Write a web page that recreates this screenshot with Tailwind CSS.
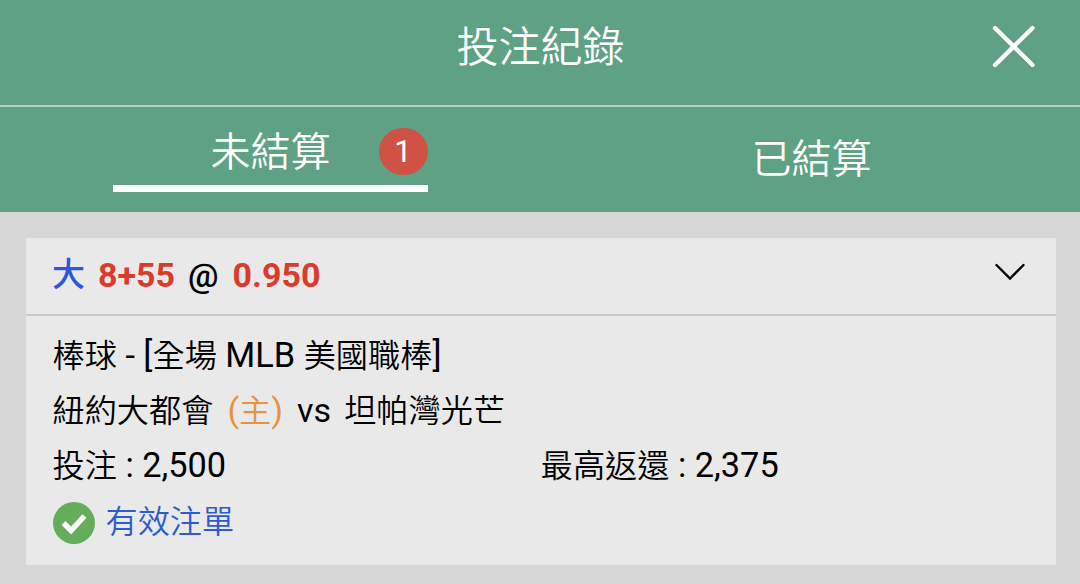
<!DOCTYPE html>
<html lang="zh-Hant">
<head>
  <meta charset="UTF-8" />
  <title>投注紀錄</title>
  <meta name="viewport" content="width=device-width, initial-scale=1" />
  <script src="https://cdn.jsdelivr.net/npm/@tailwindcss/browser@4"></script>
</head>
<body class="h-[584px] overflow-hidden bg-[#d7d7d7] font-[Roboto,'Noto_Sans_CJK_TC',sans-serif] text-black">

  <!-- HEADER -->
  <header class="grid h-[107px] grid-cols-[1fr_auto_1fr] border-b-2 border-[#b4d3c5] bg-[#5ea185] text-white">
    <span></span>
    <h1 class="pt-[17px] pl-px text-[42px] leading-[62px] font-[350]">投注紀錄</h1>
    <button class="mt-[25px] mr-[45px] h-[43px] w-[43px] justify-self-end" aria-label="關閉">
      <svg viewBox="0 0 43 43" class="h-[43px] w-[43px]" fill="none" stroke="currentColor" stroke-width="4.4" stroke-linecap="round">
        <path d="M3 3L40.500 40M40.500 3L3 40"/>
      </svg>
    </button>
  </header>

  <!-- TABS -->
  <nav class="flex h-[105px] bg-[#5ea185] text-[40px] leading-[60px] font-[350] text-white">
    <div class="flex w-1/2 justify-center">
      <a class="mt-4 flex h-[69px] w-[315px] border-b-[7px] border-white pl-[98px]">
        <span>未結算</span>
        <span class="mt-[5px] ml-12 h-[47px] w-[49px] rounded-full bg-[#cf5245] text-center text-[31px] leading-[47px] font-normal">1</span>
      </a>
    </div>
    <a class="w-1/2 pt-[23px] pl-[3px] text-center">已結算</a>
  </nav>

  <!-- BET CARD -->
  <main class="pt-[26px] pr-6 pl-[26px]">
    <article class="h-[327px] bg-[#e9e9e9]">
      <div class="flex h-[78px] justify-between border-b-2 border-[#cbcbcb] pr-[31px] pl-[26px]">
        <div class="flex text-[34px] leading-[75px] font-bold text-[#dc3a2b]">
          <span class="mr-[13px] text-[33px] leading-[74px] font-medium text-[#2b59d8]">大</span>
          <span class="mr-[13px]">8+55</span>
          <span class="mr-[14px] font-medium text-black">@</span>
          <span>0.950</span>
        </div>
        <svg viewBox="0 0 30 18" class="mt-[25px] h-[18px] w-[30px]" fill="none" stroke="black" stroke-width="2.4" stroke-linecap="round">
          <path d="M1.500 2L15 15.500L28.500 2"/>
        </svg>
      </div>

      <div class="pt-[12px] pr-[27px] pl-[26.500px] text-[32.200px] leading-[55px] font-[350]">
        <p class="h-[55px] whitespace-pre">棒球<span class="text-[34.300px] font-normal"> - [</span>全場<span class="text-[34.300px] font-normal"> MLB </span>美國職棒<span class="text-[34.300px] font-normal">]</span></p>
        <p class="flex h-[55px] pt-px">
          <span class="mr-[14px]">紐約大都會</span>
          <span class="-mt-px mr-[14px] text-[#e8923f]"><span class="text-[34px] font-normal">(</span>主<span class="text-[34px] font-normal">)</span></span>
          <span class="-mt-px mr-[13px] text-[34px] font-normal">vs</span>
          <span>坦帕灣光芒</span>
        </p>
        <div class="grid h-[55px] grid-cols-2">
          <p>投注<span class="text-[34.300px] font-normal"> : 2,500</span></p>
          <p>最高返還<span class="text-[34.300px] font-normal"> : 2,375</span></p>
        </div>
        <div class="mt-[2px] flex items-center text-[#2f5bd0]">
          <svg viewBox="0 0 42 42" class="mr-[11px] h-[42px] w-[42px]">
            <circle cx="21" cy="21" r="21" fill="#64ae5b"/>
            <path d="M10.500 21L18 28.500L31.500 14" fill="none" stroke="white" stroke-width="5.500"/>
          </svg>
          <span>有效注單</span>
        </div>
      </div>
    </article>
  </main>
</body>
</html>
